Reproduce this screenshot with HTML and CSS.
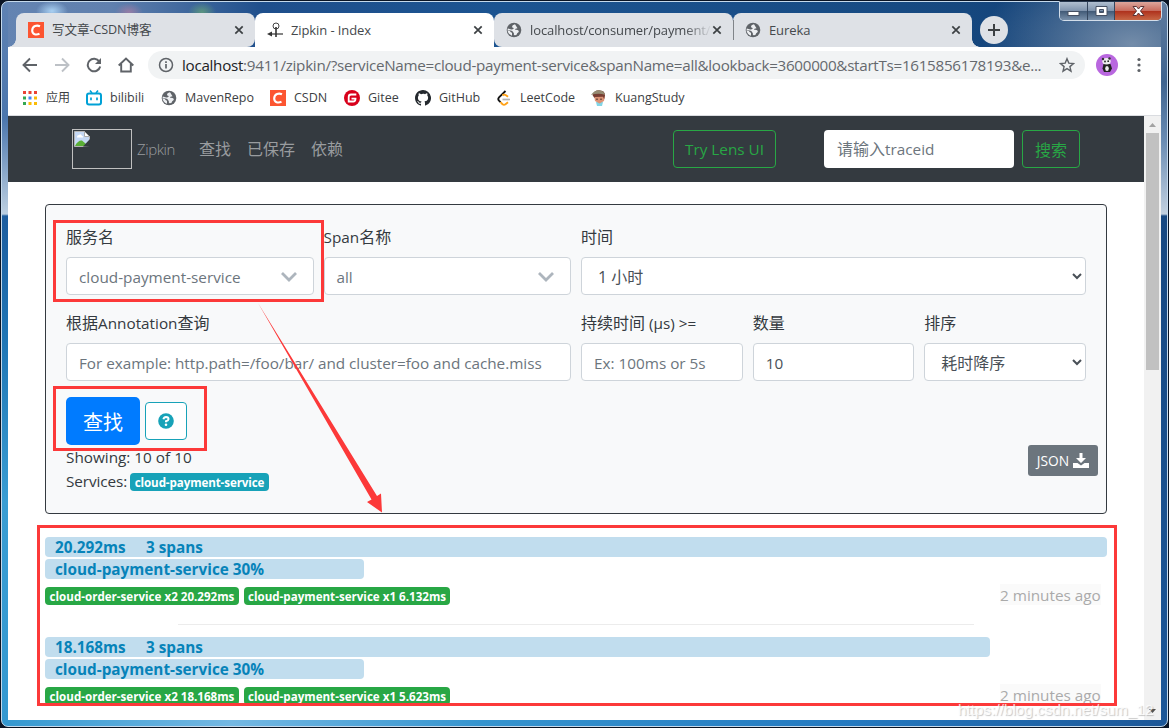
FILE: index.html
```html
<!DOCTYPE html>
<html lang="zh">
<head>
	<meta charset="utf-8">
	<title>Zipkin - Index</title>
	<link rel="stylesheet" href="styles.css">
</head>
<body>
	<svg class="defs" width="0" height="0">
		<symbol id="globe" viewBox="0 0 16 16">
			<circle cx="8" cy="8" r="7.300" fill="#5f6368"/>
			<path d="M9 2.300Q5.800 3 6 5.200q1.500.2 1.800 1.300Q6.500 7.800 4.500 7.200L1.800 6.500l-.3 1.700 3.300.4q2 .1 2.300 1.700 1.200.6.700 1.900.2 1.300 1.400 1 1.800-.2 2-2 1.700-.6 1.700-2.200-1.500-1.700-4-1.200 0-1.500 2.600-1.600z" fill="#eceef1"/>
			<path d="M1.500 8.400l2.300.6q1 1.500 2.200 1.800v2.900A6.800 6.800 0 0 1 1.500 8.400z" fill="#eceef1"/>
		</symbol>
		<symbol id="csdn" viewBox="0 0 16 16">
			<path d="M0 0h16v16H0z" fill="#fc5531"/>
			<path d="M12 4.300C9 2.900 4.400 3.600 4.200 8.400c-.1 4.300 4.100 4.700 7.300 3.400" fill="none" stroke="#fff" stroke-width="2.100"/>
		</symbol>
		<symbol id="close" viewBox="0 0 10 10">
			<path d="M1.300 1.300l7.400 7.400m0-7.400L1.300 8.700" stroke="#3c4043" stroke-width="1.700"/>
		</symbol>
	</svg>

	<div class="window">
		<div class="titlebar">
			<div class="tabs">
				<div class="tab first">
					<svg class="favicon"><use href="#csdn"/></svg>
					<span class="tab-title cn">写文章-CSDN博客</span>
					<svg class="close"><use href="#close"/></svg>
				</div>
				<div class="tab active">
					<svg class="favicon" viewBox="0 0 16 16">
						<circle cx="9" cy="4" r="3" fill="none" stroke="#444" stroke-width="1"/>
						<path d="M9 5v10" stroke="#333" stroke-width="1.600"/>
						<path d="M4 12h12" stroke="#333" stroke-width="1.200"/>
						<path d="M0 12l5-2.500v5z" fill="#333"/>
					</svg>
					<span class="tab-title">Zipkin - Index</span>
					<svg class="close"><use href="#close"/></svg>
				</div>
				<div class="tab">
					<svg class="favicon"><use href="#globe"/></svg>
					<span class="tab-title fade">localhost/consumer/payment/</span>
					<svg class="close"><use href="#close"/></svg>
				</div>
				<div class="tab last">
					<svg class="favicon"><use href="#globe"/></svg>
					<span class="tab-title">Eureka</span>
					<svg class="close"><use href="#close"/></svg>
				</div>
			</div>
			<div class="new-tab">
				<svg width="12" height="12" viewBox="0 0 12 12"><path d="M6 0v12M0 6h12" stroke="#3c4043" stroke-width="2"/></svg>
			</div>
			<div class="controls">
				<div class="control"><svg width="13" height="14" viewBox="0 0 13 14"><rect x="1" y="7.500" width="11" height="4" fill="#fff" stroke="#465063"/></svg></div>
				<div class="control max"><svg width="13" height="14" viewBox="0 0 13 14"><path d="M1 2.500h11v9H1zM4.500 5.500v3h4v-3z" fill="#fff" fill-rule="evenodd" stroke="#465063"/></svg></div>
				<div class="control exit"><svg width="13" height="14" viewBox="0 0 13 14"><path d="M1 2.500h3.500l2 2.500 2-2.500H12L8.500 7l3.500 4.500H8.500l-2-2.500-2 2.500H1L4.500 7z" fill="#fff" stroke="#5c3436"/></svg></div>
			</div>
		</div>

		<div class="toolbar">
			<svg class="tool" viewBox="0 0 16 16"><path d="M15 8H2M8 1.500L1.500 8 8 14.500" fill="none" stroke="#5f6368" stroke-width="1.900"/></svg>
			<svg class="tool" viewBox="0 0 16 16"><path d="M1 8h13M8 1.500L14.500 8 8 14.500" fill="none" stroke="#bdc1c6" stroke-width="1.900"/></svg>
			<svg class="tool" viewBox="0 0 16 16"><path d="M13.300 4.500A6.300 6.300 0 1 0 14.200 9.500" fill="none" stroke="#5f6368" stroke-width="2"/><path d="M15 1v6H9z" fill="#5f6368"/></svg>
			<svg class="tool" viewBox="0 0 16 16"><path d="M.7 8.500L8 1.500l7.300 7M3.200 7v7.500h9.600V7" fill="none" stroke="#5f6368" stroke-width="1.900"/></svg>
			<div class="omnibox">
				<svg width="16" height="16" viewBox="0 0 16 16"><circle cx="8" cy="8" r="6.500" fill="none" stroke="#5f6368" stroke-width="1.500"/><path d="M8 7v4.500M8 4.200v1.700" stroke="#5f6368" stroke-width="1.700"/></svg>
				<span class="url"><b>localhost</b>:9411/zipkin/?serviceName=cloud-payment-service&amp;spanName=all&amp;lookback=3600000&amp;startTs=1615856178193&amp;e...</span>
				<svg width="16" height="16" viewBox="0 0 16 16"><path d="M8 1.700l1.800 4.400 4.700.4-3.600 3.100 1.100 4.600L8 11.700l-4 2.500 1.100-4.600-3.600-3.100 4.700-.4z" fill="none" stroke="#5f6368" stroke-width="1.400"/></svg>
			</div>
			<svg class="avatar" viewBox="0 0 22 22">
				<circle cx="11" cy="11" r="11" fill="#b967df"/>
				<path d="M7.500 10h7l1.500 4.500-2 3.500H8l-1.500-3.500z" fill="#222"/>
				<ellipse cx="10.500" cy="7.300" rx="4.200" ry="3.200" fill="#eee"/>
				<ellipse cx="11" cy="14.500" rx="1.800" ry="2.500" fill="#eee"/>
				<circle cx="7" cy="5" r="1.200" fill="#333"/><circle cx="13.500" cy="4.500" r="1.200" fill="#333"/>
				<circle cx="9" cy="7.500" r=".9" fill="#222"/><circle cx="12.200" cy="7.200" r=".9" fill="#222"/>
			</svg>
			<svg class="menu" viewBox="0 0 4 16"><g fill="#5f6368"><circle cx="2" cy="2.500" r="1.600"/><circle cx="2" cy="8" r="1.600"/><circle cx="2" cy="13.500" r="1.600"/></g></svg>
		</div>

		<div class="bookmarks">
			<div class="bookmark">
				<svg viewBox="0 0 16 16"><path d="M1 1h3v3H1zM6.500 1h3v3h-3zM12 1h3v3h-3z" fill="#ea4335"/><path d="M1 6.500h3v3H1zM1 12h3v3H1z" fill="#34a853"/><path d="M6.500 6.500h3v3h-3z" fill="#4285f4"/><path d="M12 6.500h3v3h-3zM6.500 12h3v3h-3zM12 12h3v3h-3z" fill="#fbbc05"/></svg>
				<span class="cn">应用</span>
			</div>
			<div class="bookmark">
				<svg viewBox="0 0 16 16"><path d="M4 .5l2 2.500m6-2.500l-2 2.500" stroke="#00a1d6" stroke-width="1.600"/><rect x="1" y="3.500" width="14" height="11" rx="2" fill="none" stroke="#00a1d6" stroke-width="2"/><path d="M5 7.500v2.800m6-2.800v2.800" stroke="#00a1d6" stroke-width="1.700"/></svg>
				<span>bilibili</span>
			</div>
			<div class="bookmark"><svg><use href="#globe"/></svg><span>MavenRepo</span></div>
			<div class="bookmark"><svg><use href="#csdn"/></svg><span>CSDN</span></div>
			<div class="bookmark">
				<svg viewBox="0 0 16 16"><circle cx="8" cy="8" r="8" fill="#d8001b"/><path d="M12.300 4.500H7Q4.700 4.500 4.700 7v4.500h4.500q2.300 0 2.300-2.800H7.500" fill="none" stroke="#fff" stroke-width="1.800"/></svg>
				<span>Gitee</span>
			</div>
			<div class="bookmark">
				<svg viewBox="0 0 16 16"><path d="M8 0C3.580 0 0 3.580 0 8c0 3.540 2.290 6.530 5.470 7.590.4.070.55-.17.55-.38v-1.490c-2.230.48-2.700-.94-2.700-.94-.36-.93-.89-1.170-.89-1.170-.73-.5.060-.49.060-.49.8.060 1.230.83 1.230.83.72 1.220 1.880.87 2.340.66.070-.52.280-.87.500-1.070-1.780-.2-3.640-.89-3.640-3.950 0-.87.310-1.590.82-2.150-.08-.2-.36-1.020.08-2.120 0 0 .67-.21 2.200.82A7.600 7.600 0 0 1 8 3.870c.68 0 1.360.09 2 .27 1.530-1.040 2.200-.82 2.200-.82.44 1.100.16 1.920.08 2.120.51.56.82 1.270.82 2.150 0 3.070-1.870 3.750-3.650 3.950.29.25.54.73.54 1.480v2.190c0 .21.150.46.550.38A8 8 0 0 0 8 0z" fill="#24292e"/></svg>
				<span>GitHub</span>
			</div>
			<div class="bookmark">
				<svg viewBox="0 0 16 16"><path d="M9.500 1L3 7.300Q1.500 9 3 10.700l1.500 1.500" fill="none" stroke="#111" stroke-width="1.800"/><path d="M6.500 5.500l1-.8q1.500-.5 4.500 2M4.500 12.200l2 2q1.500 1 3 0l2.500-2" fill="none" stroke="#ffa116" stroke-width="1.900"/><path d="M6.500 9.500H14" stroke="#b3b3b3" stroke-width="1.700"/></svg>
				<span>LeetCode</span>
			</div>
			<div class="bookmark">
				<svg viewBox="0 0 16 16"><path d="M5 12h7l-1 4H6z" fill="#82d5e6"/><path d="M3 5h11l-1 6-4.500 2.500L4 11z" fill="#dc9275"/><path d="M1.500 5Q3 .4 8 .3q6 .2 6 5l-.8 4-1.200-2.500-8 .3-.7 1z" fill="#783d32"/><path d="M0 5Q3 .2 8 .2q5 .3 6 4.500Q7 2.700 0 5z" fill="#958b72"/><path d="M6 8.500v1.500m4-1.500v1.500" stroke="#301c1b"/></svg>
				<span>KuangStudy</span>
			</div>
		</div>

		<div class="viewport">
			<div class="page">
				<div class="navbar">
					<div class="brand-logo">
						<svg width="16" height="16" viewBox="0 0 16 16"><path d="M.5.5h10l5 5v10H.5z" fill="#c5d8f4" stroke="#b5b5b5"/><path d="M10.500.5v5h5z" fill="#fff" stroke="#aaa"/><path d="M3 6q0-2 2-2 2-2 3 1 2 0 1 1.500H3z" fill="#fff"/><path d="M1 15q3-6 7-5.500L12 13v2z" fill="#5aae36"/><path d="M9 15.500L16 8v8z" fill="#343a40"/></svg>
					</div>
					<span class="brand">Zipkin</span>
					<div class="nav-links cn"><span>查找</span><span>已保存</span><span>依赖</span></div>
					<button class="btn lens">Try Lens UI</button>
					<div class="trace-input"><span class="cn">请输入</span>traceid</div>
					<button class="btn search cn">搜索</button>
				</div>

				<div class="card">
					<div class="form">
						<div class="field w3">
							<label class="cn">服务名</label>
							<div class="control-box chosen">cloud-payment-service<svg width="16" height="10" viewBox="0 0 16 10"><path d="M1 1l7 7 7-7" fill="none" stroke="#adb5bd" stroke-width="2.800"/></svg></div>
						</div>
						<div class="field w3">
							<label>Span<span class="cn">名称</span></label>
							<div class="control-box chosen">all<svg width="16" height="10" viewBox="0 0 16 10"><path d="M1 1l7 7 7-7" fill="none" stroke="#adb5bd" stroke-width="2.800"/></svg></div>
						</div>
						<div class="field w6">
							<label class="cn">时间</label>
							<select class="control-box cn"><option>1 小时</option></select>
						</div>
						<div class="field w6">
							<label><span class="cn">根据</span>Annotation<span class="cn">查询</span></label>
							<input class="control-box annotation" placeholder="For example: http.path=/foo/bar/ and cluster=foo and cache.miss">
						</div>
						<div class="field w2">
							<label><span class="cn">持续时间</span> (μs) &gt;=</label>
							<input class="control-box" placeholder="Ex: 100ms or 5s">
						</div>
						<div class="field w2">
							<label class="cn">数量</label>
							<input class="control-box" value="10">
						</div>
						<div class="field w2">
							<label class="cn">排序</label>
							<select class="control-box cn"><option>耗时降序</option></select>
						</div>
					</div>
					<div class="actions">
						<button class="find">查找</button>
						<button class="help"><svg width="16" height="16" viewBox="0 0 16 16"><circle cx="8" cy="8" r="7.800" fill="#17a2b8"/><path d="M5.400 6.200Q6 4 8 4q2.500.1 2.500 2.100Q10.400 7.500 8 8.300v1" fill="none" stroke="#fff" stroke-width="2"/><circle cx="8" cy="11.700" r="1.300" fill="#fff"/></svg></button>
					</div>
					<div class="summary">
						<div>
							<div>Showing: 10 of 10</div>
							<div class="services">Services: <span class="badge info">cloud-payment-service</span></div>
						</div>
						<button class="json">JSON <svg width="16" height="15" viewBox="0 0 16 15"><path d="M6.500 0h3v5H13L8 10 3 5h3.500z" fill="#fff"/><path d="M0 10h4.500L8 12.500l3.500-2.500H16v5H0z" fill="#fff"/></svg></button>
					</div>
				</div>

				<div class="traces">
					<div class="trace">
						<div class="bar" style="width: 100%"><span class="duration">20.292ms</span><span>3 spans</span></div>
						<div class="bar" style="width: 30%">cloud-payment-service 30%</div>
						<div class="trace-info">
							<span class="badge order">cloud-order-service x2 20.292ms</span>
							<span class="badge payment">cloud-payment-service x1 6.132ms</span>
							<span class="time">2 minutes ago</span>
						</div>
					</div>
					<hr>
					<div class="trace">
						<div class="bar" style="width: 89%"><span class="duration">18.168ms</span><span>3 spans</span></div>
						<div class="bar" style="width: 30%">cloud-payment-service 30%</div>
						<div class="trace-info">
							<span class="badge order">cloud-order-service x2 18.168ms</span>
							<span class="badge payment">cloud-payment-service x1 5.623ms</span>
							<span class="time">2 minutes ago</span>
						</div>
					</div>
				</div>
			</div>
			<div class="scrollbar">
				<svg width="7" height="4" viewBox="0 0 7 4"><path d="M0 4l3.500-4L7 4z" fill="#a3a3a3"/></svg>
				<div class="thumb"></div>
				<svg class="down" width="7" height="4" viewBox="0 0 7 4"><path d="M0 0l3.500 4L7 0z" fill="#505050"/></svg>
			</div>
		</div>
	</div>

	<svg class="marks" width="1169" height="728" viewBox="0 0 1169 728">
		<g fill="none" stroke="#fc3939" stroke-width="3">
			<rect x="54.500" y="221.500" width="268" height="79"/>
			<rect x="54.500" y="387.500" width="151" height="62"/>
			<rect x="38.500" y="526.500" width="1077" height="178"/>
		</g>
		<path d="M258 303l119 193 4-2.500 1 19-15-10.500 4.500-2.500z" fill="#fc3939"/>
	</svg>
	<div class="watermark">https://blog.csdn.net/sum_12</div>
</body>
</html>
```
FILE: styles.css
```css
* {
	box-sizing: border-box;
}
body {
	margin: 0;
	width: 1169px;
	height: 728px;
	padding-top: 1px;
	overflow: hidden;
	background: #0a1424;
	font-family: "Open Sans", "Noto Sans CJK SC", sans-serif;
	font-size: 15.3px;
	line-height: 24px;
	color: #343a40;
}
svg {
	flex: none;
}
.defs {
	position: absolute;
}
.cn {
	font-size: 16px;
}
input, select, button {
	font-family: inherit;
	font-size: inherit;
}

/* window frame */
.window {
	width: 1167px;
	height: 726px;
	margin: 0 1px;
	padding: 0 6px 6px;
	border: 1px solid #c5d9eb;
	border-radius: 7px;
	background:
		linear-gradient(#5f82b3, #4b76ad 116px, #bccfe1 212px, #1d5d9f 214px, #2076b5 340px, #3a9dd3 500px, #3498d0) 0 0 / 6px 100% no-repeat,
		linear-gradient(#5f7b9f, #3f648f 80px, #6b8db4 140px, #c3d1e0 212px, #174881 214px, #1c5798) 100% 0 / 6px 100% no-repeat,
		linear-gradient(90deg, #3498d0, #74b8e3 230px, #3594cf 480px, #2479c0 850px, #1c5798) 0 100% / 100% 6px no-repeat,
		radial-gradient(ellipse 16px 10px at 50px 9px, #a9d0f2, rgba(169, 208, 242, 0)),
		radial-gradient(ellipse 14px 9px at 127px 10px, rgba(165, 125, 165, 0.8), rgba(165, 125, 165, 0)),
		radial-gradient(ellipse 14px 10px at 200px 10px, rgba(95, 155, 125, 0.9), rgba(95, 155, 125, 0)),
		radial-gradient(ellipse at 1130px 42px, #738ca9, rgba(80, 110, 150, 0) 150px) no-repeat,
		linear-gradient(90deg, #6484b2, #6080ae 110px, #1f4f8c 260px, #1c5491 500px, #174a82 900px, #123e72);
}
.titlebar {
	display: flex;
	height: 45px;
}
.tabs {
	display: flex;
	align-items: flex-end;
	width: 956px;
	margin-left: 8px;
}
.tab {
	display: flex;
	align-items: center;
	flex: 1;
	height: 34px;
	padding: 0 11px 0 12px;
	border-radius: 8px 8px 0 8px;
	background: #dee1e6;
	font-size: 13px;
	color: #45494d;
}
.tab.first {
	position: relative;
	border-radius: 8px 8px 8px 0;
}
.tab.first::before,
.tab.last::after {
	content: "";
	position: absolute;
	bottom: 0;
	width: 8px;
	height: 8px;
}
.tab.first::before {
	left: -8px;
	background: radial-gradient(circle at 0 0, transparent 7.5px, #dee1e6 8px);
}
.tab.last::after {
	right: -8px;
	background: radial-gradient(circle at 100% 0, transparent 7.5px, #dee1e6 8px);
}
.tab.active {
	background: #fff;
	border-radius: 8px 8px 0 0;
}
.tab.last {
	position: relative;
	border-radius: 8px 8px 0 0;
}
.tab.last::before {
	content: "";
	position: absolute;
	left: 0;
	top: 7px;
	width: 1px;
	height: 20px;
	background: #808489;
}
.favicon {
	width: 16px;
	height: 16px;
	margin-right: 8px;
}
.tab .cn {
	font-size: 12.6px;
}
.tab-title {
	flex: 1;
	overflow: hidden;
	white-space: nowrap;
	letter-spacing: -0.1px;
}
.fade {
	-webkit-mask-image: linear-gradient(90deg, #000 85%, transparent);
	mask-image: linear-gradient(90deg, #000 85%, transparent);
}
.close {
	width: 10px;
	height: 10px;
}
.new-tab {
	display: flex;
	align-items: center;
	justify-content: center;
	width: 28px;
	height: 28px;
	margin: 14px 0 0 8px;
	border-radius: 50%;
	background: #dee1e6;
}
.controls {
	display: flex;
	width: 103px;
	height: 20px;
	margin: -1px -1px 0 auto;
	border: 1px solid #d3deea;
	border-top-color: #26374e;
	border-radius: 0 0 5px 5px;
	overflow: hidden;
}
.control {
	display: flex;
	align-items: center;
	justify-content: center;
	width: 28px;
	border-right: 1px solid #34465e;
	background: linear-gradient(#b0bfd0, #8094ad 48%, #405976 50%, #7990aa);
}
.control.max {
	width: 27px;
}
.control.exit {
	flex: 1;
	border: 0;
	background: linear-gradient(#dca69c, #c76c5e 48%, #ae301c 50%, #c76745);
}

/* toolbar */
.toolbar {
	display: flex;
	align-items: center;
	height: 36px;
	padding-left: 14px;
	background: #fff;
}
.tool {
	width: 16px;
	height: 16px;
	margin-right: 16px;
}
.omnibox {
	display: flex;
	align-items: center;
	width: 937px;
	height: 28px;
	margin-left: -2px;
	margin-right: 11px;
	padding: 0 10px;
	border-radius: 14px;
	background: #f1f3f4;
}
.url {
	flex: 1;
	margin-left: 8px;
	white-space: nowrap;
	font-size: 15.2px;
	letter-spacing: -0.28px;
	color: #65696e;
}
.url b {
	font-weight: normal;
	color: #202124;
}
.avatar {
	width: 22px;
	height: 22px;
}
.menu {
	width: 4px;
	height: 16px;
	margin-left: 19px;
}
.bookmarks {
	display: grid;
	grid-template-columns: 64px 75px 109px 74px 71px 81px 95px 110px;
	height: 33px;
	padding: 0 0 2px 14px;
	border-bottom: 1px solid #dadce0;
	background: #fff;
	font-size: 12.5px;
	color: #3c4043;
}
.bookmark {
	display: flex;
	align-items: center;
	gap: 8px;
}
.bookmark svg {
	width: 16px;
	height: 16px;
}
.bookmark .cn {
	font-size: 12px;
}

/* page */
.viewport {
	display: flex;
	height: 604px;
	background: #fff;
}
.page {
	width: 1136px;
	height: 588px;
	overflow: hidden;
}
.scrollbar {
	display: flex;
	flex-direction: column;
	align-items: center;
	width: 17px;
	padding: 7px 0;
	background: #f1f1f1;
}
.thumb {
	width: 13px;
	height: 237px;
	margin-top: 6px;
	background: #c1c1c1;
}
.down {
	margin-top: auto;
}
.navbar {
	display: flex;
	align-items: center;
	height: 66px;
	padding-left: 64px;
	background: #343a40;
	color: #999c9f;
}
.brand-logo {
	width: 60px;
	height: 40px;
	padding: 1px;
	border: 1px solid #c0c0c0;
	line-height: 0;
}
.brand {
	width: 67px;
	padding-left: 5px;
	font-size: 15px;
	font-weight: 300;
	letter-spacing: -0.4px;
}
.nav-links {
	display: flex;
	gap: 16px;
	width: 474px;
}
.btn {
	height: 38px;
	padding: 0;
	border: 1px solid #28a745;
	border-radius: 4px;
	background: none;
	color: #28a745;
}
.lens {
	width: 103px;
}
.trace-input {
	width: 190px;
	height: 38px;
	margin: 0 8px 0 48px;
	padding: 7px 13px;
	border-radius: 4px;
	background: #fff;
	color: #6c757d;
}
.search {
	width: 58px;
}
.card {
	height: 310px;
	margin: 22px 37px 0;
	padding: 20px;
	border: 1px solid #343a40;
	border-radius: 4px;
	background: #f8f9fa;
}
.form {
	display: grid;
	grid-template-columns: repeat(12, 1fr);
	gap: 16px 10px;
}
.field {
	min-width: 0;
}
.w2 {
	grid-column: span 2;
}
.w3 {
	grid-column: span 3;
}
.w6 {
	grid-column: span 6;
}
label {
	display: block;
	height: 24px;
	margin-bottom: 8px;
	white-space: nowrap;
}
.control-box {
	display: block;
	width: 100%;
	height: 38px;
	padding: 7px 12px 5px;
	border: 1px solid #ced4da;
	border-radius: 4px;
	background: #fff;
	color: #495057;
}
select.control-box {
	padding-right: 0;
	padding-bottom: 7px;
}
.control-box::placeholder {
	color: #6c757d;
	opacity: 1;
}
.annotation {
	letter-spacing: -0.03px;
}
.chosen {
	display: flex;
	align-items: center;
	justify-content: space-between;
	padding-right: 16px;
	color: #6c757d;
}
.actions {
	display: flex;
	align-items: center;
	gap: 5px;
	height: 48px;
	margin-top: 16px;
}
.find {
	width: 74px;
	height: 48px;
	border: 0;
	border-radius: 5px;
	background: #007bff;
	color: #fff;
	font-size: 20px;
}
.help {
	display: flex;
	align-items: center;
	justify-content: center;
	width: 42px;
	height: 38px;
	border: 1px solid #17a2b8;
	border-radius: 4px;
	background: #fff;
}
.summary {
	display: flex;
	justify-content: space-between;
	align-items: flex-start;
	margin-right: -12px;
}
.services {
	display: flex;
	gap: 3px;
	letter-spacing: -0.1px;
}
.json {
	display: flex;
	align-items: center;
	justify-content: center;
	gap: 4px;
	width: 70px;
	height: 31px;
	padding: 0;
	border: 0;
	border-radius: 3px;
	background: #6c757d;
	color: #fff;
	font-size: 13.8px;
}
.badge {
	display: inline-block;
	height: 18px;
	border-radius: 4px;
	color: #fff;
	font-size: 11.6px;
	font-weight: 700;
	line-height: 19px;
	text-align: center;
	white-space: nowrap;
}
.info {
	width: 139px;
	margin-top: 4px;
	background: #17a2b8;
}
.traces {
	margin: 23px 37px 0;
}
.bar {
	height: 20px;
	margin-bottom: 2px;
	padding-left: 10px;
	border-radius: 4px;
	background: #c1ddee;
	color: #0783b9;
	font-size: 15.3px;
	font-weight: 700;
	line-height: 21px;
	white-space: nowrap;
}
.duration {
	display: inline-block;
	width: 91px;
}
.trace-info {
	display: flex;
	align-items: flex-end;
	gap: 5px;
	height: 24px;
}
.trace-info .badge {
	background: #28a745;
}
.order {
	width: 194px;
}
.payment {
	width: 206px;
}
.time {
	width: 101px;
	height: 21px;
	margin-left: auto;
	margin-right: 6px;
	background: #fafafa;
	color: #aaa;
	line-height: 23px;
	white-space: nowrap;
}
hr {
	width: 75%;
	height: 1px;
	margin: 19px auto 12px;
	border: 0;
	background: #ececec;
}

/* annotations over the window */
.marks {
	position: absolute;
	left: 0;
	top: 0;
}
.watermark {
	position: absolute;
	left: 958px;
	top: 698px;
	color: rgba(255, 255, 255, 0.8);
	font-family: "Liberation Sans", Arial, sans-serif;
	font-size: 15.3px;
	text-shadow: 1px 1px 1px rgba(110, 110, 110, 0.4);
}
```
